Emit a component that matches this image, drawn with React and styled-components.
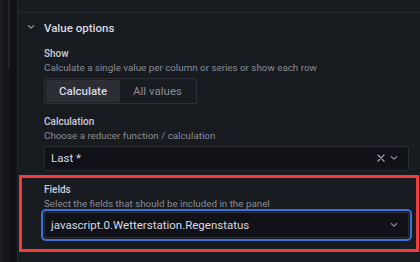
import React from 'react'
import styled, { createGlobalStyle } from 'styled-components'

const Global = createGlobalStyle`
    html, body {
        margin: 0;
        padding: 0;
        background: #111217;
        font-family: Roboto, "Liberation Sans", sans-serif;
        color: #ccccdc;
    }
    * { box-sizing: border-box; }
`

const Chevron = ({ color = '#9a9ba5' }) => (
    <svg width="8" height="6" viewBox="0 0 8 6" fill="none">
        <path d="M1.2 1.6 L4 4.2 L6.8 1.6" stroke={color} strokeWidth="1.1" strokeLinecap="round" strokeLinejoin="round" />
    </svg>
)

const Cross = () => (
    <svg width="8" height="8" viewBox="0 0 8 8" fill="none">
        <path d="M1 1 L7 7 M7 1 L1 7" stroke="#a0a1aa" strokeWidth="1.3" strokeLinecap="round" />
    </svg>
)

export default function App() {
    return (
        <>
            <Global />
            <Page>
                <Rail>
                    <RailEdge />
                    <RailTrack><Thumb /></RailTrack>
                    <RailGap />
                </Rail>
                <Panel>
                    <TopStrip />
                    <SectionHead>
                        <Toggle><Chevron /></Toggle>
                        <Title>Value options</Title>
                    </SectionHead>
                    <Body>
                        <Field>
                            <Label>Show</Label>
                            <Description>Calculate a single value per column or series or show each row</Description>
                            <RadioGroup>
                                <RadioButton active width={74}>Calculate</RadioButton>
                                <RadioButton width={75}>All values</RadioButton>
                            </RadioGroup>
                        </Field>
                        <Field>
                            <Label>Calculation</Label>
                            <Description>Choose a reducer function / calculation</Description>
                            <Select>
                                <SelectValue>Last *</SelectValue>
                                <Indicators>
                                    <Cross />
                                    <Chevron />
                                </Indicators>
                            </Select>
                        </Field>
                        <Highlight>
                            <Label>Fields</Label>
                            <Description>Select the fields that should be included in the panel</Description>
                            <Select focused>
                                <SelectValue>javascript.0.Wetterstation.Regenstatus</SelectValue>
                                <Indicators>
                                    <Chevron />
                                </Indicators>
                            </Select>
                        </Highlight>
                    </Body>
                </Panel>
            </Page>
        </>
    )
}

const Page = styled.div`
    display: flex;
    width: 420px;
    height: 262px;
    overflow: hidden;
    background: #111217;
`
const Rail = styled.div`
    display: flex;
    width: 17px;
    flex-shrink: 0;
`
const RailEdge = styled.div`
    width: 3px;
    background: #1b1c20;
`
const RailTrack = styled.div`
    width: 7px;
    background: #15161a;
    display: flex;
    justify-content: flex-end;
`
const Thumb = styled.div`
    width: 2px;
    height: 68px;
    background: #24262b;
`
const RailGap = styled.div`
    flex: 1;
    background: #111217;
`
const Panel = styled.div`
    flex: 1;
    background: #181b1f;
    border-left: 1px solid #24262b;
    display: flex;
    flex-direction: column;
`
const TopStrip = styled.div`
    height: 13px;
    flex-shrink: 0;
    border-bottom: 1px solid #25272c;
`
const SectionHead = styled.div`
    display: flex;
    align-items: center;
    height: 29px;
    flex-shrink: 0;
    padding-left: 6px;
`
const Toggle = styled.div`
    width: 13px;
    display: flex;
    align-items: center;
    justify-content: center;
    margin-right: 7px;
    margin-top: -1px;
`
const Title = styled.div`
    font-size: 11.5px;
    font-weight: 500;
    color: #d8d9e3;
`
const Body = styled.div`
    display: flex;
    flex-direction: column;
    padding: 5px 11px 0 26px;
`
const Field = styled.div`
    display: flex;
    flex-direction: column;
    margin-bottom: 11.5px;
`
const Label = styled.div`
    font-size: 10px;
    font-weight: 500;
    line-height: 14px;
    color: #ccccdc;
`
const Description = styled.div`
    font-size: 9.8px;
    line-height: 13px;
    color: #8b8c96;
    margin-bottom: 3.5px;
`
const RadioGroup = styled.div`
    display: flex;
    align-self: flex-start;
    border: 1px solid #2f3136;
    border-radius: 2px;
    padding: 1px;
    height: 26px;
`
const RadioButton = styled.div`
    display: flex;
    align-items: center;
    justify-content: center;
    width: ${({ width }) => width}px;
    font-size: 11.5px;
    font-weight: ${({ active }) => (active ? 500 : 400)};
    color: ${({ active }) => (active ? '#d8d9e3' : '#8b8c96')};
    background: ${({ active }) => (active ? '#2c2e33' : 'transparent')};
    border-radius: 2px;
`
const Select = styled.div`
    display: flex;
    align-items: center;
    height: ${({ focused }) => (focused ? '26px' : '25px')};
    padding: 0 10px 0 6px;
    background: #111217;
    border: 1px solid #2a2c31;
    border-radius: 2px;
    box-shadow: ${({ focused }) => (focused ? '0 0 0 1px #181b1f, 0 0 0 3px #3d71d9' : 'none')};
`
const SelectValue = styled.div`
    flex: 1;
    font-size: 11.5px;
    color: #d8d9e3;
`
const Indicators = styled.div`
    display: flex;
    align-items: center;
    gap: 5px;
`
const Highlight = styled.div`
    display: flex;
    flex-direction: column;
    margin: -7px -10px 0 -25px;
    padding: 5px 7px 11px 22px;
    border: 3px solid #f03c3c;

    ${Description} {
        margin-bottom: 2px;
    }
`
